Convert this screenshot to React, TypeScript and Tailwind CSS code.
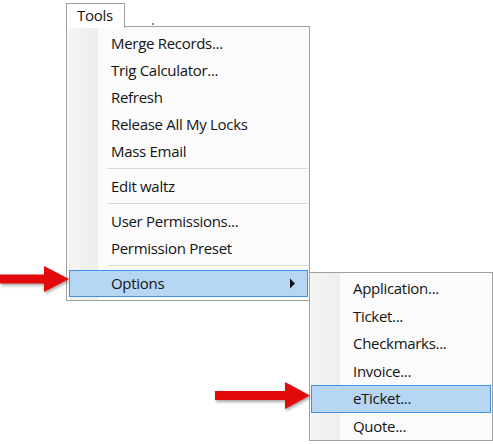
import React from "react";

const font = { fontFamily: '"Open Sans", "Noto Sans", sans-serif' };

function Item({ label, highlight, arrow }: { label: string; highlight?: boolean; arrow?: boolean }) {
  return (
    <div
      className={
        "flex items-center h-[27px] border " +
        (highlight ? "bg-[#b7d6f3] border-[#3f93e3]" : "border-transparent")
      }
    >
      <div className="w-[41px]" />
      <span className="text-[15px] text-[#141414] leading-none flex-1 tracking-[-0.3px]">{label}</span>
      {arrow && (
        <svg width="7" height="11" viewBox="0 0 7 11" className="mr-[11px]">
          <path d="M1 0.5 L6 5.5 L1 10.5 Z" fill="#111" />
        </svg>
      )}
    </div>
  );
}

function Sep() {
  return (
    <div className="h-[8px] flex items-center pl-[38px]">
      <div className="flex-1 h-[2px] border-t border-[#d9d9d9] border-b border-b-white" />
    </div>
  );
}

function Arrow({ w, h }: { w: number; h: number }) {
  return (
    <svg width={w} height={h} viewBox={`0 0 ${w} ${h}`} style={{ filter: "drop-shadow(1px 2px 1.5px rgba(0,0,0,0.35))" }}>
      <polygon
        points={`0,${h / 2 - 4.5} ${w - 25},${h / 2 - 4.5} ${w - 25},0 ${w},${h / 2} ${w - 25},${h} ${w - 25},${h / 2 + 4.5} 0,${h / 2 + 4.5}`}
        fill="#e20a0a"
      />
    </svg>
  );
}

export default function App() {
  return (
    <div className="relative w-[493px] h-[444px] bg-white overflow-hidden" style={font}>
      {/* Main menu */}
      <div className="absolute left-[66px] top-[26px] w-[244px] h-[275px] border border-[#a0a0a0] bg-[#fbfbfb] pl-[2px] pr-[1px] pt-[3px]">
        <div className="absolute left-[2px] top-0 bottom-0 w-[29px] bg-gradient-to-r from-[#f3f3f3] to-[#eeeeee]" />
        <div className="relative flex flex-col">
          <Item label="Merge Records..." />
          <Item label="Trig Calculator..." />
          <Item label="Refresh" />
          <Item label="Release All My Locks" />
          <Item label="Mass Email" />
          <Sep />
          <Item label="Edit waltz" />
          <Sep />
          <Item label="User Permissions..." />
          <Item label="Permission Preset" />
          <Sep />
          <Item label="Options" highlight arrow />
        </div>
      </div>

      {/* Tools tab */}
      <div className="absolute left-[66px] top-[3px] w-[59px] h-[25px] border border-b-0 border-[#a0a0a0] bg-white flex items-start pl-[10px] pt-[1px]">
        <span className="text-[15px] text-[#141414] leading-[20px] tracking-[-0.3px]">Tools</span>
      </div>
      <div className="absolute left-[152px] top-[23px] w-[2px] h-[2px] bg-[#888]" />

      {/* Submenu */}
      <div className="absolute left-[309px] top-[272px] w-[184px] h-[169px] border border-[#a0a0a0] bg-[#fbfbfb] pl-[1px] pr-[1px] pt-[2px]">
        <div className="absolute left-[1px] top-0 bottom-0 w-[29px] bg-gradient-to-r from-[#f3f3f3] to-[#eeeeee]" />
        <div className="relative flex flex-col [&>div]:h-[27.5px]">
          <Item label="Application..." />
          <Item label="Ticket..." />
          <Item label="Checkmarks..." />
          <Item label="Invoice..." />
          <Item label="eTicket..." highlight />
          <Item label="Quote..." />
        </div>
      </div>

      {/* Annotation arrows */}
      <div className="absolute left-0 top-[266px]">
        <Arrow w={69} h={26} />
      </div>
      <div className="absolute left-[215px] top-[382px]">
        <Arrow w={95} h={27} />
      </div>
    </div>
  );
}
